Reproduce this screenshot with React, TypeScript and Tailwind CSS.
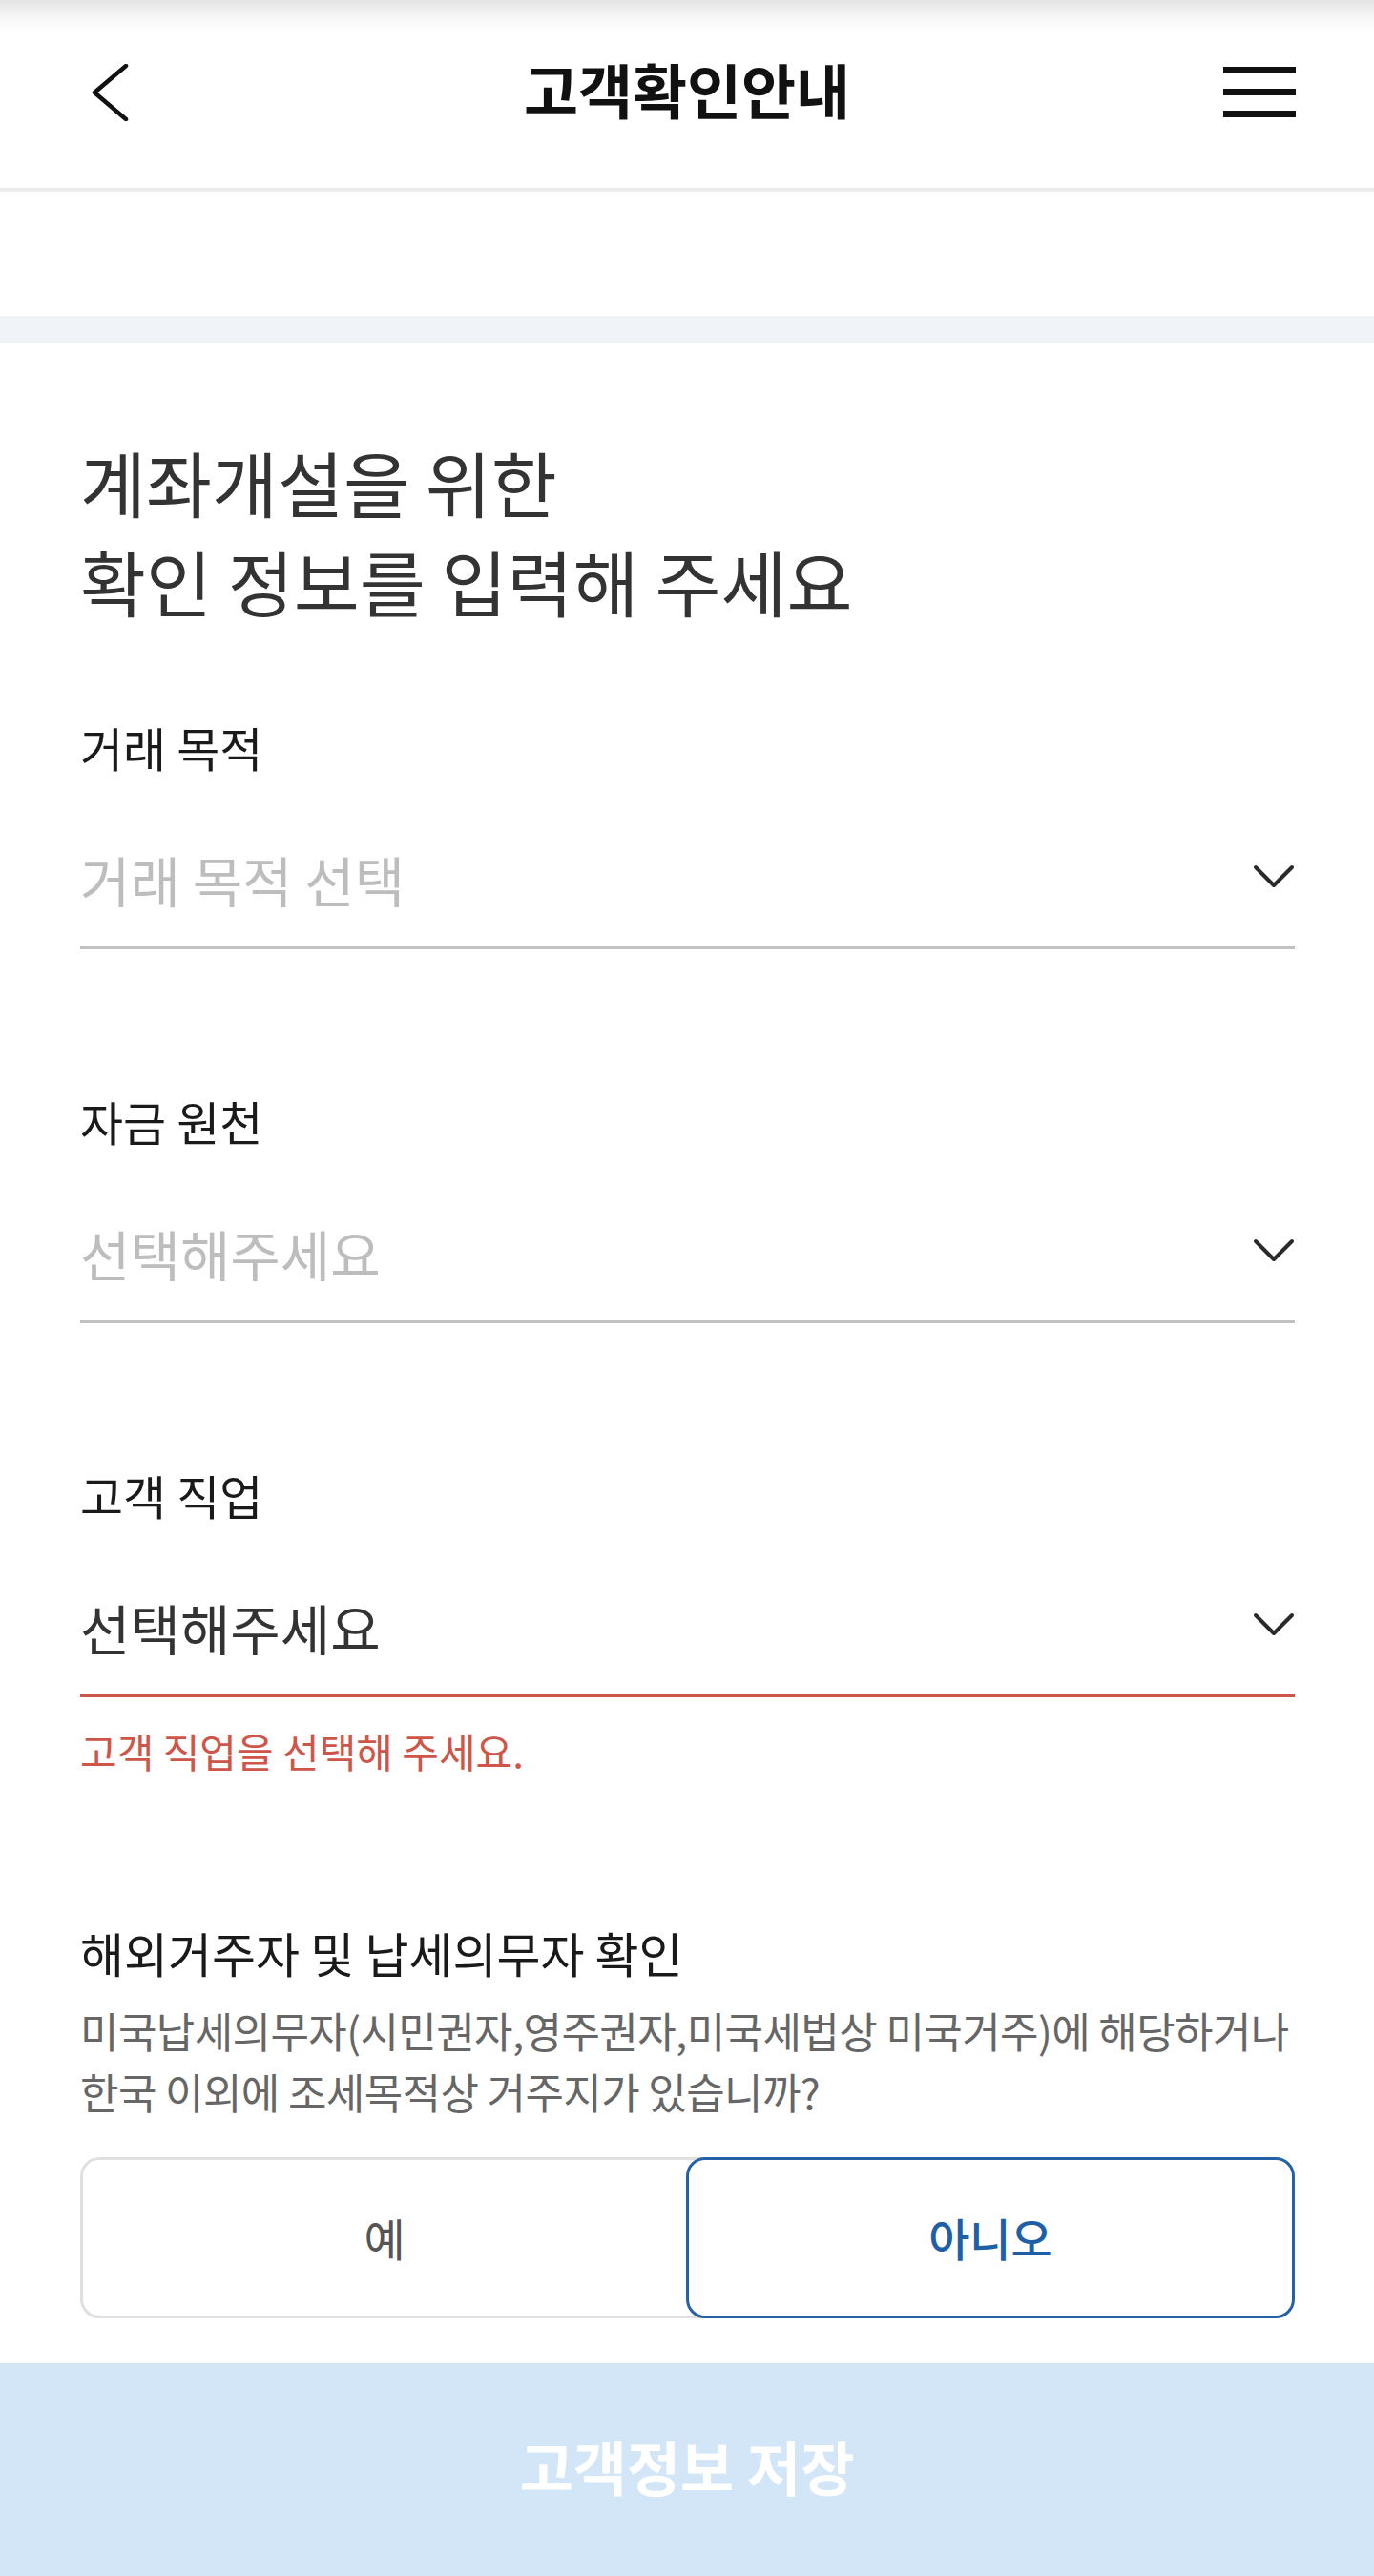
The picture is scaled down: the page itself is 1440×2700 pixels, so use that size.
import React from 'react'

const FONT = { fontFamily: '"Noto Sans CJK KR", "Noto Sans", sans-serif' }

function ChevronDown() {
  return (
    <svg width="44" height="27" viewBox="0 0 44 27" fill="none" className="mt-[15px] shrink-0">
      <path d="M3 3 L22 22 L41 3" stroke="#2a2a2a" strokeWidth="4" strokeLinecap="round" strokeLinejoin="round" />
    </svg>
  )
}

interface SelectFieldProps {
  label: string
  value: string
  placeholder?: boolean
  error?: string
}

function SelectField({ label, value, placeholder, error }: SelectFieldProps) {
  return (
    <div>
      <p className="text-[49px] leading-[60px] text-[#1a1a1a]">{label}</p>
      <div
        className={
          'mt-[78px] flex items-start justify-between pb-[41px] border-b-[3px] ' +
          (error ? 'border-[#cf5549]' : 'border-[#c2c2c2]')
        }
      >
        <span className={'text-[57px] leading-[60px] ' + (placeholder ? 'text-[#bdbdbd]' : 'text-[#333333]')}>
          {value}
        </span>
        <ChevronDown />
      </div>
      {error && <p className="mt-[31px] text-[42px] leading-[50px] text-[#cf5549]">{error}</p>}
    </div>
  )
}

export default function App() {
  return (
    <div className="w-[1440px] h-[2700px] bg-white flex flex-col overflow-hidden" style={FONT}>
      {/* Header */}
      <header className="h-[197px] grid grid-cols-[1fr_auto_1fr] items-center pb-[4px] bg-[linear-gradient(to_bottom,#e4e4e4_0px,#f6f6f6_18px,#ffffff_36px)]">
        <div className="pl-[96px]">
          <svg width="40" height="60" viewBox="0 0 40 60" fill="none">
            <path d="M36 2 L3 30 L36 58" stroke="#111111" strokeWidth="4.5" strokeLinecap="round" strokeLinejoin="round" />
          </svg>
        </div>
        <h1 className="mb-[8px] text-[62px] leading-[70px] font-bold text-[#111111]">고객확인안내</h1>
        <div className="flex justify-end pr-[82px]">
          <div className="flex flex-col gap-[16px]">
            <span className="block w-[76px] h-[7px] bg-[#111111]" />
            <span className="block w-[76px] h-[7px] bg-[#111111]" />
            <span className="block w-[76px] h-[7px] bg-[#111111]" />
          </div>
        </div>
      </header>
      <div className="h-[4px] bg-[#ebebeb]" />
      <div className="h-[130px]" />
      <div className="h-[28px] bg-[#f0f4f9]" />

      {/* Form */}
      <main className="pl-[84px] pr-[83px] pt-[94px]">
        <h2 className="text-[75px] leading-[104px] text-[#333333]">
          계좌개설을 위한
          <br />
          확인 정보를 입력해 주세요
        </h2>

        <div className="mt-[92px] flex flex-col gap-[150px]">
          <SelectField label="거래 목적" value="거래 목적 선택" placeholder />
          <SelectField label="자금 원천" value="선택해주세요" placeholder />
          <SelectField label="고객 직업" value="선택해주세요" error="고객 직업을 선택해 주세요." />
        </div>

        <section className="mt-[156px]">
          <p className="text-[50px] leading-[60px] text-[#1a1a1a]">해외거주자 및 납세의무자 확인</p>
          <p className="mt-[20px] text-[44px] leading-[64px] text-[#666666] tracking-[-0.6px]">
            <span className="block whitespace-nowrap">미국납세의무자(시민권자,영주권자,미국세법상 미국거주)에 해당하거나</span>
            <span className="block whitespace-nowrap">한국 이외에 조세목적상 거주지가 있습니까?</span>
          </p>

          <div className="mt-[37px] flex h-[169px]">
            <button className="flex-1 -mr-[24px] pr-[24px] rounded-l-[20px] border-[3px] border-r-0 border-[#e0e0e0] bg-white text-[47px] text-[#555555]">
              예
            </button>
            <button className="relative flex-1 rounded-[20px] border-[3px] border-[#2462a8] bg-white text-[47px] font-medium text-[#1f5fa8]">
              아니오
            </button>
          </div>
        </section>
      </main>

      <div className="mt-auto h-[223px] pb-[8px] bg-[#d3e6f8] flex items-center justify-center">
        <span className="text-[61px] font-bold text-white">고객정보 저장</span>
      </div>
    </div>
  )
}
